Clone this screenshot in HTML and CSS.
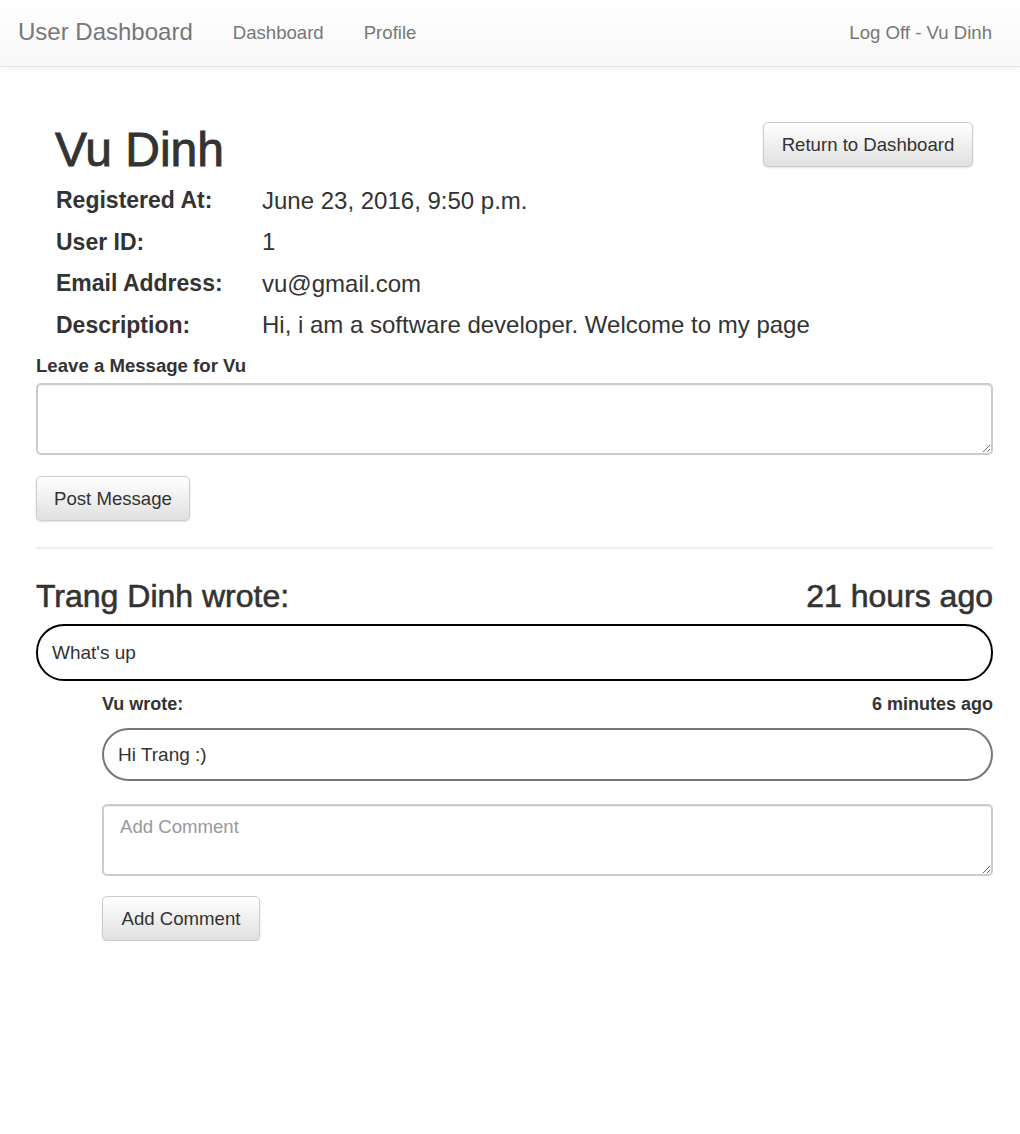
FILE: index.html
```html
<!DOCTYPE html>
<html lang="en">
<head>
<meta charset="utf-8">
<title>User Dashboard</title>
<link rel="stylesheet" href="styles.css">
</head>
<body>
<nav class="navbar">
  <div class="nav-left">
    <a class="brand" href="#">User Dashboard</a>
    <a class="nav-link" href="#">Dashboard</a>
    <a class="nav-link" href="#">Profile</a>
  </div>
  <a class="nav-link logoff" href="#">Log Off - Vu Dinh</a>
</nav>

<main class="container">
  <section class="profile">
    <div class="profile-head">
      <h1 class="name">Vu Dinh</h1>
      <button class="btn btn-return">Return to Dashboard</button>
    </div>
    <dl class="details">
      <div class="row"><dt>Registered At:</dt><dd>June 23, 2016, 9:50 p.m.</dd></div>
      <div class="row"><dt>User ID:</dt><dd>1</dd></div>
      <div class="row"><dt>Email Address:</dt><dd>vu@gmail.com</dd></div>
      <div class="row"><dt>Description:</dt><dd>Hi, i am a software developer. Welcome to my page</dd></div>
    </dl>
  </section>

  <form class="post-form">
    <label class="form-label">Leave a Message for Vu</label>
    <textarea class="textarea"></textarea>
    <button type="button" class="btn btn-post">Post Message</button>
  </form>

  <hr class="divider">

  <article class="message">
    <div class="message-head">
      <h3>Trang Dinh wrote:</h3>
      <h3>21 hours ago</h3>
    </div>
    <div class="pill pill-main">What's up</div>

    <div class="comments">
      <div class="comment-head">
        <span>Vu wrote:</span>
        <span>6 minutes ago</span>
      </div>
      <div class="pill pill-comment">Hi Trang :)</div>
      <textarea class="textarea" placeholder="Add Comment"></textarea>
      <button type="button" class="btn btn-comment">Add Comment</button>
    </div>
  </article>
</main>
</body>
</html>
```

FILE: styles.css
```css
* { box-sizing: border-box; }

body {
  margin: 0;
  font-family: "Liberation Sans", Arial, Helvetica, sans-serif;
  color: #333;
  background: #fff;
  font-size: 18.6px;
}

.navbar {
  height: 67px;
  display: flex;
  align-items: center;
  justify-content: space-between;
  padding: 0 28px 0 18px;
  background: linear-gradient(to bottom, #ffffff 0%, #f8f8f8 100%);
  border-bottom: 1px solid #e4e4e4;
  box-shadow: 0 1px 6px rgba(0,0,0,0.06);
}

.nav-left {
  display: flex;
  align-items: center;
}

.navbar a {
  text-decoration: none;
  color: #777;
}

.brand {
  font-size: 24px;
  margin-right: 40px;
  margin-top: -2px;
}

.nav-link {
  font-size: 18.6px;
  margin-right: 40px;
}

.logoff { margin-right: 0; }

.container {
  padding: 0 27px 0 36px;
}

.profile {
  padding: 56px 20px 0 20px;
}

.profile-head {
  display: flex;
  justify-content: space-between;
  align-items: flex-start;
}

.name {
  margin: 3px 0 0 -1px;
  font-size: 48px;
  font-weight: 500;
  line-height: 1;
  -webkit-text-stroke: 0.9px #333;
}

.btn {
  font-family: inherit;
  font-size: 18.6px;
  color: #333;
  background: linear-gradient(to bottom, #ffffff 0%, #e0e0e0 100%);
  border: 1px solid #ccc;
  border-radius: 5px;
  box-shadow: 0 1px 2px rgba(0,0,0,0.12);
  height: 45px;
  padding: 0 17px;
  white-space: nowrap;
  cursor: pointer;
}

.btn-return {
  margin-top: -1px;
  height: 45px;
  width: 210px;
}

.details {
  margin: 6px 0 0 0;
}

.details .row {
  display: flex;
  height: 41.5px;
  align-items: center;
}

.details dt {
  width: 206px;
  font-weight: bold;
  font-size: 23px;
}

.details dd {
  margin: 0;
  font-size: 24px;
}

.post-form {
  display: flex;
  flex-direction: column;
  align-items: flex-start;
  margin-top: 9px;
}

.form-label {
  font-weight: bold;
  font-size: 18.6px;
  margin-bottom: 6px;
}

.textarea {
  display: block;
  width: 100%;
  height: 72px;
  border: 2px solid #ccc;
  border-radius: 5px;
  font-family: inherit;
  font-size: 18.6px;
  padding: 10px 16px;
  color: #555;
  box-shadow: inset 0 1px 1px rgba(0,0,0,0.075);
  resize: vertical;
}

.textarea::placeholder { color: #999; }

.btn-post {
  margin-top: 21px;
  width: 154px;
}

.divider {
  border: 0;
  border-top: 2px solid #eee;
  margin: 26px 0 30px 0;
}

.message-head {
  display: flex;
  justify-content: space-between;
  align-items: baseline;
  margin-top: 2px;
}

.message-head h3 {
  margin: 0;
  font-size: 32px;
  font-weight: 500;
  line-height: 1.1;
  -webkit-text-stroke: 0.6px #333;
}

.pill {
  height: 57px;
  border-radius: 28px;
  display: flex;
  align-items: center;
  padding: 0 14px;
  font-size: 19px;
}

.pill-main {
  margin-top: 10px;
  border: 2px solid #000;
}

.comments {
  margin-left: 66px;
  display: flex;
  flex-direction: column;
  align-items: flex-start;
}

.comment-head {
  width: 100%;
  display: flex;
  justify-content: space-between;
  font-weight: bold;
  font-size: 18px;
  margin-top: 13px;
}

.pill-comment {
  width: 100%;
  height: 53px;
  margin-top: 13px;
  border: 2px solid #777;
}

.comments .textarea {
  margin-top: 23px;
}

.btn-comment {
  margin-top: 20px;
  width: 158px;
}
```
